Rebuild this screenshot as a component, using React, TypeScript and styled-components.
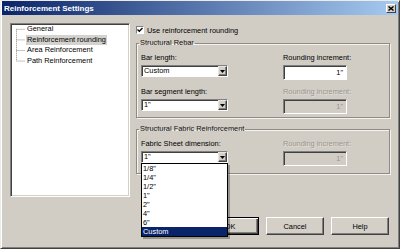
import React from 'react';
import styled, { createGlobalStyle } from 'styled-components';

const GlobalStyle = createGlobalStyle`
  html, body {
    margin: 0;
    padding: 0;
    background: #d1cdc5;
  }
  body {
    font-family: "Liberation Sans", Arial, sans-serif;
  }
  * {
    box-sizing: border-box;
  }
`;

const Window = styled.div`
  width: 400px;
  height: 249px;
  background: #d1cdc5;
  border-style: solid;
  border-width: 1px;
  border-color: #ecebe8 #404040 #404040 #ecebe8;
  box-shadow: inset 1px 1px 0 #fff, inset -1px -1px 0 #808080;
  padding: 0 1px;
  display: flex;
  flex-direction: column;
  font-size: 7.4px;
  color: #000;
`;

const TitleBar = styled.div`
  height: 14px;
  display: flex;
  align-items: center;
  justify-content: space-between;
  padding: 0 2px 0 2px;
  background: linear-gradient(to right, #0a246a, #a6caf0);
  color: #fff;
  font-weight: bold;
  font-size: 8px;
`;

const CloseButton = styled.div`
  width: 10px;
  height: 9px;
  display: flex;
  align-items: center;
  justify-content: center;
  background: #d4d0c8;
  border-style: solid;
  border-width: 1px;
  border-color: #fff #404040 #404040 #fff;
`;

const Content = styled.div`
  display: grid;
  grid-template-columns: 120px 254px;
  column-gap: 6px;
  padding: 8px 0 0 8px;
  align-items: start;
`;

const TreePanel = styled.div`
  height: 174px;
  background: #fff;
  border-style: solid;
  border-width: 1px;
  border-color: #808080 #fff #fff #808080;
  box-shadow: inset 1px 1px 0 #404040, inset -1px -1px 0 #d4d0c8;
  display: flex;
  align-items: flex-start;
  padding: 0 0 0 1px;
`;

const TreeLines = styled.svg`
  flex: none;
`;

const TreeItems = styled.div`
  display: flex;
  flex-direction: column;
  align-items: flex-start;
`;

const TreeItem = styled.div<{ $selected?: boolean }>`
  height: 10.6px;
  line-height: 10.6px;
  padding: 0 1px;
  white-space: nowrap;
  background: ${(p) => (p.$selected ? '#d4d2ce' : 'transparent')};
`;

const RightColumn = styled.div`
  display: flex;
  flex-direction: column;
`;

const CheckRow = styled.label`
  height: 14px;
  display: flex;
  align-items: center;
  gap: 3px;
  white-space: nowrap;
`;

const CheckBox = styled.span`
  width: 8px;
  height: 8px;
  background: #fff;
  border-style: solid;
  border-width: 1px;
  border-color: #808080 #fff #fff #808080;
  display: flex;
  align-items: center;
  justify-content: center;
`;

const Group = styled.fieldset<{ $top: number; $bottom: number }>`
  margin: ${(p) => p.$top}px 0 0 0;
  padding: 6px 0 ${(p) => p.$bottom}px 4px;
  min-width: 0;
  border: 1px solid #8e8b85;
  box-shadow: inset 1px 1px 0 #f4f3f0, 1px 1px 0 #f4f3f0;
`;

const Legend = styled.legend`
  padding: 0 1px;
  margin-left: -2px;
  line-height: 8px;
  height: 8px;
  color: #111;
`;

const FieldGrid = styled.div<{ $rows: string }>`
  display: grid;
  grid-template-columns: 87px 64px;
  grid-template-rows: ${(p) => p.$rows};
  column-gap: 55px;
  row-gap: 3px;
`;

const FieldLabel = styled.div<{ $disabled?: boolean }>`
  align-self: end;
  height: 9px;
  line-height: 9px;
  white-space: nowrap;
  color: ${(p) => (p.$disabled ? '#9a968f' : '#000')};
  text-shadow: ${(p) => (p.$disabled ? '1px 1px 0 rgba(255,255,255,0.35)' : 'none')};
`;

const Combo = styled.div`
  position: relative;
  align-self: start;
  height: 12px;
  width: 87px;
  background: #fff;
  border-style: solid;
  border-width: 1px;
  border-color: #808080 #fff #fff #808080;
  box-shadow: inset 1px 1px 0 #404040;
  display: flex;
  align-items: center;
  padding-left: 2px;
`;

const ComboText = styled.span`
  flex: 1;
  line-height: 10px;
`;

const ComboArrow = styled.span`
  width: 9px;
  height: 10px;
  background: #d4d0c8;
  border-style: solid;
  border-width: 1px;
  border-color: #e8e6e2 #404040 #404040 #e8e6e2;
  box-shadow: inset -1px -1px 0 #808080;
  display: flex;
  align-items: center;
  justify-content: center;
`;

const TextBox = styled.div<{ $disabled?: boolean }>`
  height: 15px;
  width: 64px;
  background: ${(p) => (p.$disabled ? '#d1cdc5' : '#fff')};
  color: ${(p) => (p.$disabled ? '#9a968f' : '#000')};
  border-style: solid;
  border-width: 1px;
  border-color: #808080 #fff #fff #808080;
  box-shadow: inset 1px 1px 0 #404040;
  display: flex;
  align-items: center;
  justify-content: flex-end;
  padding-right: 3px;
`;

const DropList = styled.div`
  position: absolute;
  top: 100%;
  left: -1px;
  margin-top: 1px;
  width: 87px;
  background: #fff;
  border: 1px solid #000;
  box-shadow: 2px 2px 0 rgba(0, 0, 0, 0.28);
  z-index: 10;
`;

const DropItem = styled.div<{ $active?: boolean }>`
  height: 9px;
  line-height: 9px;
  padding-left: 1px;
  background: ${(p) => (p.$active ? '#0a246a' : 'transparent')};
  color: ${(p) => (p.$active ? '#fff' : '#000')};
`;

const ButtonRow = styled.div`
  display: flex;
  justify-content: flex-end;
  gap: 7px;
  margin: 43px 1px 0 0;
`;

const Button = styled.div<{ $default?: boolean }>`
  width: 58px;
  height: 18px;
  display: flex;
  align-items: center;
  justify-content: center;
  background: #d4d0c8;
  border-style: solid;
  border-width: 1px;
  border-color: ${(p) => (p.$default ? '#000' : '#fff #404040 #404040 #fff')};
  box-shadow: ${(p) =>
    p.$default
      ? 'inset 1px 1px 0 #fff, inset -1px -1px 0 #404040, inset -2px -2px 0 #808080'
      : 'inset -1px -1px 0 #808080'};
`;

const treeItems = ['General', 'Reinforcement rounding', 'Area Reinforcement', 'Path Reinforcement'];
const sheetSizes = ['1/8"', '1/4"', '1/2"', '1"', '2"', '4"', '6"', 'Custom'];

const Arrow = () => (
  <svg width="5" height="3" viewBox="0 0 5 3">
    <path d="M0 0 H5 L2.5 3 Z" fill="#000" />
  </svg>
);

const ComboBox: React.FC<{ value: string; children?: React.ReactNode }> = ({ value, children }) => (
  <Combo>
    <ComboText>{value}</ComboText>
    <ComboArrow>
      <Arrow />
    </ComboArrow>
    {children}
  </Combo>
);

export default function App() {
  const step = 10.6;
  const h = step * treeItems.length;
  return (
    <>
      <GlobalStyle />
      <Window>
        <TitleBar>
          <span>Reinforcement Settings</span>
          <CloseButton>
            <svg width="6" height="5" viewBox="0 0 6 5">
              <path d="M0.5 0.5 L5.5 4.5 M5.5 0.5 L0.5 4.5" stroke="#000" strokeWidth="1.4" />
            </svg>
          </CloseButton>
        </TitleBar>
        <Content>
          <TreePanel>
            <TreeLines width="14" height={h} viewBox={`0 0 14 ${h}`}>
              <path
                d={`M4.5 ${step / 2} V${h - step / 2}` +
                  treeItems.map((_, i) => ` M4.5 ${step / 2 + i * step} H13`).join('')}
                stroke="#8a8a8a"
                strokeWidth="1"
                strokeDasharray="1 1"
                fill="none"
              />
            </TreeLines>
            <TreeItems>
              {treeItems.map((t, i) => (
                <TreeItem key={t} $selected={i === 1}>
                  {t}
                </TreeItem>
              ))}
            </TreeItems>
          </TreePanel>
          <RightColumn>
            <CheckRow>
              <CheckBox>
                <svg width="6" height="6" viewBox="0 0 6 6">
                  <path d="M0.5 2.5 L2.3 4.3 L5.5 1" stroke="#000" strokeWidth="1.3" fill="none" />
                </svg>
              </CheckBox>
              Use reinforcement rounding
            </CheckRow>
            <Group $top={2} $bottom={3}>
              <Legend>Structural Rebar</Legend>
              <FieldGrid $rows="9px 15px 13px 15px">
                <FieldLabel>Bar length:</FieldLabel>
                <FieldLabel>Rounding increment:</FieldLabel>
                <ComboBox value="Custom" />
                <TextBox>1"</TextBox>
                <FieldLabel>Bar segment length:</FieldLabel>
                <FieldLabel $disabled>Rounding increment:</FieldLabel>
                <ComboBox value={'1"'} />
                <TextBox $disabled>1"</TextBox>
              </FieldGrid>
            </Group>
            <Group $top={7} $bottom={7}>
              <Legend>Structural Fabric Reinforcement</Legend>
              <FieldGrid $rows="9px 15px">
                <FieldLabel>Fabric Sheet dimension:</FieldLabel>
                <FieldLabel $disabled>Rounding increment:</FieldLabel>
                <ComboBox value={'1"'}>
                  <DropList>
                    {sheetSizes.map((s) => (
                      <DropItem key={s} $active={s === 'Custom'}>
                        {s}
                      </DropItem>
                    ))}
                  </DropList>
                </ComboBox>
                <TextBox $disabled>1"</TextBox>
              </FieldGrid>
            </Group>
            <ButtonRow>
              <Button $default>OK</Button>
              <Button>Cancel</Button>
              <Button>Help</Button>
            </ButtonRow>
          </RightColumn>
        </Content>
      </Window>
    </>
  );
}
